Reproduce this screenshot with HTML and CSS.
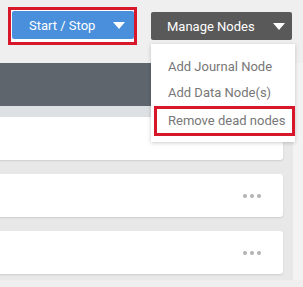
FILE: index.html
```html
<!DOCTYPE html>
<html lang="en">
<head>
  <meta charset="UTF-8">
  <title>Nodes</title>
  <link rel="stylesheet" href="styles.css">
</head>
<body>

<div class="toolbar">
  <div class="mark">
    <button class="btn start-btn">Start / Stop <span class="caret"></span></button>
  </div>
  <div class="manage">
    <button class="btn manage-btn">Manage Nodes <span class="caret"></span></button>
    <div class="menu">
      <div class="menu-item">Add Journal Node</div>
      <div class="menu-item">Add Data Node(s)</div>
      <div class="menu-item marked">Remove dead nodes</div>
    </div>
  </div>
</div>

<div class="content">
  <div class="main">
    <div class="head-bar"></div>
    <div class="stripe"></div>
    <div class="row"><span class="dots"><i></i><i></i><i></i></span></div>
    <div class="row"><span class="dots"><i></i><i></i><i></i></span></div>
    <div class="row"><span class="dots"><i></i><i></i><i></i></span></div>
  </div>
  <div class="side"></div>
</div>

</body>
</html>
```

FILE: styles.css
```css
body {
  margin: 0;
  font-family: Roboto, 'Liberation Sans', sans-serif;
  background: #efefef;
  width: 303px;
  height: 287px;
  overflow: hidden;
}

.toolbar {
  display: flex;
  align-items: flex-start;
  padding: 7px 0 0 8px;
  height: 63px;
  box-sizing: border-box;
}

.mark {
  border: 3px solid #d7182a;
  padding: 1px 0 3px 1px;
  background: #fff;
}

.btn {
  border: none;
  border-radius: 2px;
  color: #fff;
  font-family: inherit;
  height: 28px;
  display: flex;
  align-items: center;
  padding: 0;
}

.start-btn {
  background: #4a8fdb;
  width: 122px;
  font-size: 13px;
  padding-left: 17px;
}

.start-btn .caret {
  margin-left: 18px;
}

.caret {
  width: 0;
  height: 0;
  border-left: 6px solid transparent;
  border-right: 6px solid transparent;
  border-top: 7px solid #fff;
}

.manage {
  position: relative;
  margin: 5px 0 0 14px;
}

.manage-btn {
  background: #595959;
  width: 141px;
  font-size: 13px;
  padding-left: 16px;
}

.manage-btn .caret {
  margin-left: 18px;
}

.menu {
  position: absolute;
  top: 32px;
  left: 0;
  width: 144px;
  background: #fff;
  box-shadow: 0 1px 4px rgba(0, 0, 0, 0.2);
  padding: 10px 0 6px;
  z-index: 2;
}

.menu-item {
  font-size: 13px;
  color: #777;
  height: 26px;
  line-height: 26px;
  padding-left: 17px;
}

.menu-item.marked {
  border: 3px solid #d7182a;
  height: 24px;
  line-height: 24px;
  margin-left: 3px;
  padding-left: 11px;
}

.content {
  display: flex;
}

.main {
  width: 293px;
  background: #e8e8e8;
  padding-right: 10px;
  box-sizing: border-box;
  height: 217px;
}

.side {
  flex: 1;
  background: #f3f3f3;
}

.head-bar {
  height: 43px;
  background: #5e656d;
}

.stripe {
  height: 11px;
  background: #dde1e4;
}

.row {
  height: 43px;
  margin: 0 0 14px -4px;
  background: #fff;
  border-radius: 3px;
  box-shadow: 0 1px 2px rgba(0, 0, 0, 0.12);
  display: flex;
  align-items: center;
  justify-content: flex-end;
  padding-right: 22px;
}

.dots {
  display: flex;
  gap: 3px;
}

.dots i {
  width: 4px;
  height: 4px;
  border-radius: 50%;
  background: #b3b3b3;
}
```
